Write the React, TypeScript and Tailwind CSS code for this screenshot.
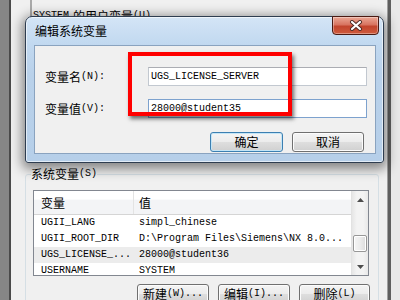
import React from 'react'

const rows = [
  { name: 'UGII_LANG', value: 'simpl_chinese' },
  { name: 'UGII_ROOT_DIR', value: 'D:\\Program Files\\Siemens\\NX 8.0...' },
  { name: 'UGS_LICENSE_...', value: '28000@student36', selected: true },
  { name: 'USERNAME', value: 'SYSTEM' },
]

function Mixed({ cjk, ascii }: { cjk: string; ascii?: string }) {
  return (
    <span className="inline-flex items-center h-[14px] whitespace-nowrap leading-[14px]">
      <span className="font-['Noto_Sans_CJK_SC',sans-serif] text-[12px] leading-[14px]">{cjk}</span>
      {ascii && <span className="font-['Liberation_Mono',monospace] text-[10px] leading-[14px]">{ascii}</span>}
    </span>
  )
}

function WinButton({ children, focused, w }: { children: React.ReactNode; focused?: boolean; w: string }) {
  return (
    <div
      className={
        (focused
          ? 'border-[#3c7fb1] shadow-[inset_0_0_0_1px_#c4e5f6] '
          : 'border-[#707070] shadow-[inset_0_0_0_1px_#fcfcfc] ') +
        w +
        ' h-[20px] flex items-center justify-center rounded-[3px] border bg-[linear-gradient(180deg,#f4f4f4_0%,#ececec_48%,#dedede_52%,#d0d0d0_100%)] text-black'
      }
    >
      {children}
    </div>
  )
}

function CloseGlyph() {
  return (
    <svg width="14" height="11" viewBox="0 0 14 11">
      <path d="M3 2 L11 9 M11 2 L3 9" stroke="#4a2a24" strokeWidth="4" strokeLinecap="round" />
      <path d="M3 2 L11 9 M11 2 L3 9" stroke="#ffffff" strokeWidth="2.2" strokeLinecap="round" />
    </svg>
  )
}

export default function App() {
  return (
    <div className="relative w-[400px] h-[300px] overflow-hidden flex bg-[#f0f0f0] text-black">
      {/* window behind, at the left edge */}
      <div className="w-[9px] h-full bg-[#868686]" />
      <div className="w-[2px] h-full bg-[#4a4a4a]" />

      {/* environment variables dialog (behind) */}
      <div className="w-[376px] h-full flex flex-col bg-[#f0f0f0]">
        <div className="ml-[19px] h-[23px] pt-[9px] border-l-2 border-[#a9a9a9] pl-[1px] flex items-start gap-[4px]">
          <span className="font-['Liberation_Mono',monospace] text-[10px] leading-[14px]">SYSTEM</span>
          <Mixed cjk="的用户变量" ascii="(U)" />
        </div>

        <fieldset className="ml-[14px] mt-[144px] w-[354px] border border-[#d5dfe5] rounded-[3px] pl-[7px] pr-[9px]">
          <legend className="ml-[-2px] px-0 h-[14px] flex items-center">
            <Mixed cjk="系统变量" ascii="(S)" />
          </legend>

          <div className="mt-[9px] h-[86px] border border-[#828790] bg-white flex overflow-hidden">
            <div className="flex-1 flex flex-col">
              <div className="h-[24px] shrink-0 flex bg-[linear-gradient(180deg,#ffffff_0%,#ffffff_35%,#f3f4f6_40%,#f3f4f6_100%)] border-b border-[#d5d5d5]">
                <div className="w-[100px] pl-[7px] flex items-center border-r border-[#e3e3e3]">
                  <Mixed cjk="变量" />
                </div>
                <div className="flex-1 pl-[5px] flex items-center">
                  <Mixed cjk="值" />
                </div>
              </div>
              {rows.map((r) => (
                <div
                  key={r.name}
                  className={
                    (r.selected ? 'bg-[#ececec] ' : '') +
                    "h-[16px] shrink-0 flex items-center font-['Liberation_Mono',monospace] text-[10px] leading-[16px] whitespace-nowrap"
                  }
                >
                  <div className="w-[100px] pl-[7px]">{r.name}</div>
                  <div className="flex-1 pl-[5px]">{r.value}</div>
                </div>
              ))}
            </div>

            <div className="w-[17px] flex flex-col bg-[linear-gradient(90deg,#e6e6e6_0%,#f3f3f3_30%,#f3f3f3_70%,#e8e8e8_100%)] border-l border-[#e2e2e2]">
              <div className="h-[17px] flex items-center justify-center">
                <svg width="7" height="4" viewBox="0 0 7 4">
                  <path d="M0 4 L3.5 0 L7 4 Z" fill="#4d4d4d" />
                </svg>
              </div>
              <div className="flex-1">
                <div className="mt-[27px] mx-[1px] h-[17px] rounded-[2px] border border-[#979797] bg-[linear-gradient(90deg,#f5f5f5_0%,#ececec_50%,#dcdcdc_100%)] shadow-[inset_0_0_0_1px_#ffffff]" />
              </div>
              <div className="h-[17px] flex items-center justify-center">
                <svg width="7" height="4" viewBox="0 0 7 4">
                  <path d="M0 0 L3.5 4 L7 0 Z" fill="#4d4d4d" />
                </svg>
              </div>
            </div>
          </div>

          <div className="mt-[8px] mr-[-1px] flex justify-end gap-[9px]">
            <WinButton w="w-[72px]">
              <Mixed cjk="新建" ascii="(W)..." />
            </WinButton>
            <WinButton w="w-[72px]">
              <Mixed cjk="编辑" ascii="(I)..." />
            </WinButton>
            <WinButton w="w-[71px]">
              <Mixed cjk="删除" ascii="(L)" />
            </WinButton>
          </div>
        </fieldset>
      </div>

      {/* window edge at the right */}
      <div className="w-[1px] h-full bg-[#a0a0a0]" />
      <div className="w-[3px] h-full bg-[#5f5f5f]" />
      <div className="flex-1 h-full bg-[#e9e9e9]" />

      {/* edit system variable dialog (front) */}
      <div className="absolute left-[25px] top-[16px] w-[359px] h-[147px] flex flex-col rounded-t-[7px] rounded-b-[3px] border border-[#2e3d50] bg-[linear-gradient(180deg,#d4e5f6_0%,#c2d9f0_18%,#b9d1ea_40%,#b6cfe9_100%)] shadow-[0_3px_12px_3px_rgba(0,0,0,0.45),inset_0_0_0_1px_rgba(255,255,255,0.6)]">
        <div className="h-[28px] flex justify-between items-start">
          <div className="pl-[9px] pt-[7px] font-['Noto_Sans_CJK_SC',sans-serif] text-[12px] leading-[14px] text-black">
            编辑系统变量
          </div>
          <div className="mt-[-1px] mr-[4px] w-[47px] h-[19px] flex items-center justify-center rounded-b-[4px] border border-[#4a1a12] bg-[linear-gradient(180deg,#eba895_0%,#d87460_45%,#c2452d_55%,#cf5a3c_100%)] shadow-[inset_0_0_0_1px_rgba(255,255,255,0.35)]">
            <CloseGlyph />
          </div>
        </div>

        <div className="ml-[8px] mr-[7px] h-[109px] border border-[#8aa3bf] bg-[#f0f0f0] pt-[18px] pl-[10px] pr-[8px] flex flex-col">
          <div className="flex items-center">
            <div className="w-[103px]">
              <Mixed cjk="变量名" ascii="(N):" />
            </div>
            <div className="flex-1 h-[19px] border border-[#c2c8d0] border-t-[#abadb3] bg-white pl-[2px] flex items-center font-['Liberation_Mono',monospace] text-[10px]">
              UGS_LICENSE_SERVER
            </div>
          </div>
          <div className="mt-[8px] flex items-center">
            <div className="w-[103px]">
              <Mixed cjk="变量值" ascii="(V):" />
            </div>
            <div className="flex-1 h-[19px] border border-[#7da2ce] bg-white pl-[2px] flex items-center font-['Liberation_Mono',monospace] text-[10px]">
              28000@student35
            </div>
          </div>
          <div className="mt-[12px] mr-[3px] flex justify-end gap-[9px]">
            <WinButton w="w-[73px]" focused>
              <Mixed cjk="确定" />
            </WinButton>
            <WinButton w="w-[72px]">
              <Mixed cjk="取消" />
            </WinButton>
          </div>
        </div>
      </div>

      {/* red highlight drawn over the screenshot */}
      <div className="absolute left-[128px] top-[52px] w-[164px] h-[64px] border-[4px] border-[#ff0000] shadow-[2px_3px_4px_rgba(0,0,0,0.55)]" />
    </div>
  )
}
